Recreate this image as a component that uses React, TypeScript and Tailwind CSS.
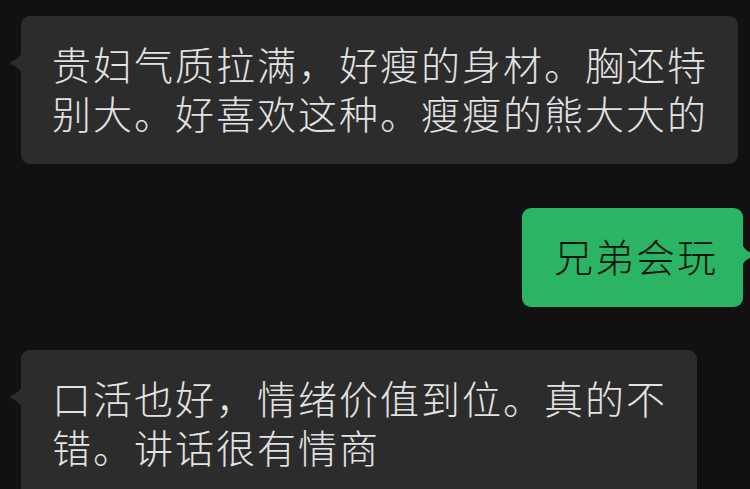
const font = { fontFamily: '"Noto Sans CJK SC", "Noto Sans", sans-serif' };

function LeftTail({ color }: { color: string }) {
  return (
    <svg
      className="absolute left-[-12px] top-[33px]"
      width="13"
      height="28"
      viewBox="0 0 13 28"
    >
      <path
        d="M13 0 C13 7 8 10 2.5 12.6 Q0.5 14 2.5 15.4 C8 18 13 21 13 28 Z"
        fill={color}
      />
    </svg>
  );
}

function RightTail({ color }: { color: string }) {
  return (
    <svg
      className="absolute right-[-12px] top-[33px]"
      width="13"
      height="28"
      viewBox="0 0 13 28"
    >
      <path
        d="M0 0 C0 7 5 10 10.5 12.6 Q12.5 14 10.5 15.4 C5 18 0 21 0 28 Z"
        fill={color}
      />
    </svg>
  );
}

function Incoming({ lines, width }: { lines: string[]; width: string }) {
  return (
    <div className={`relative ml-[21px] rounded-[9px] bg-[#2c2c2c] pt-[23px] pb-[27px] pl-[31px] ${width}`}>
      <LeftTail color="#2c2c2c" />
      <p
        className="whitespace-nowrap text-[39px] font-light leading-[49px] tracking-[2px] text-[#e3e3e3]"
        style={font}
      >
        {lines.map((l, i) => (
          <span key={i} className="block">
            {l}
          </span>
        ))}
      </p>
    </div>
  );
}

export default function App() {
  return (
    <div className="h-[489px] w-[750px] overflow-hidden bg-[#111111] pt-4">
      <Incoming
        width="w-[717px]"
        lines={["贵妇气质拉满，好瘦的身材。胸还特", "别大。好喜欢这种。瘦瘦的熊大大的"]}
      />

      <div className="mt-[44px] flex justify-end pr-[7px]">
        <div className="relative rounded-[9px] bg-[#2bb463] pt-[23px] pb-[27px] pl-[32px] pr-[25px]">
          <p
            className="whitespace-nowrap text-[39px] font-light leading-[49px] tracking-[2px] text-[#0e1510]"
            style={font}
          >
            兄弟会玩
          </p>
          <RightTail color="#2bb463" />
        </div>
      </div>

      <div className="mt-[43px]">
        <Incoming width="w-[676px]" lines={["口活也好，情绪价值到位。真的不", "错。讲话很有情商"]} />
      </div>
    </div>
  );
}
